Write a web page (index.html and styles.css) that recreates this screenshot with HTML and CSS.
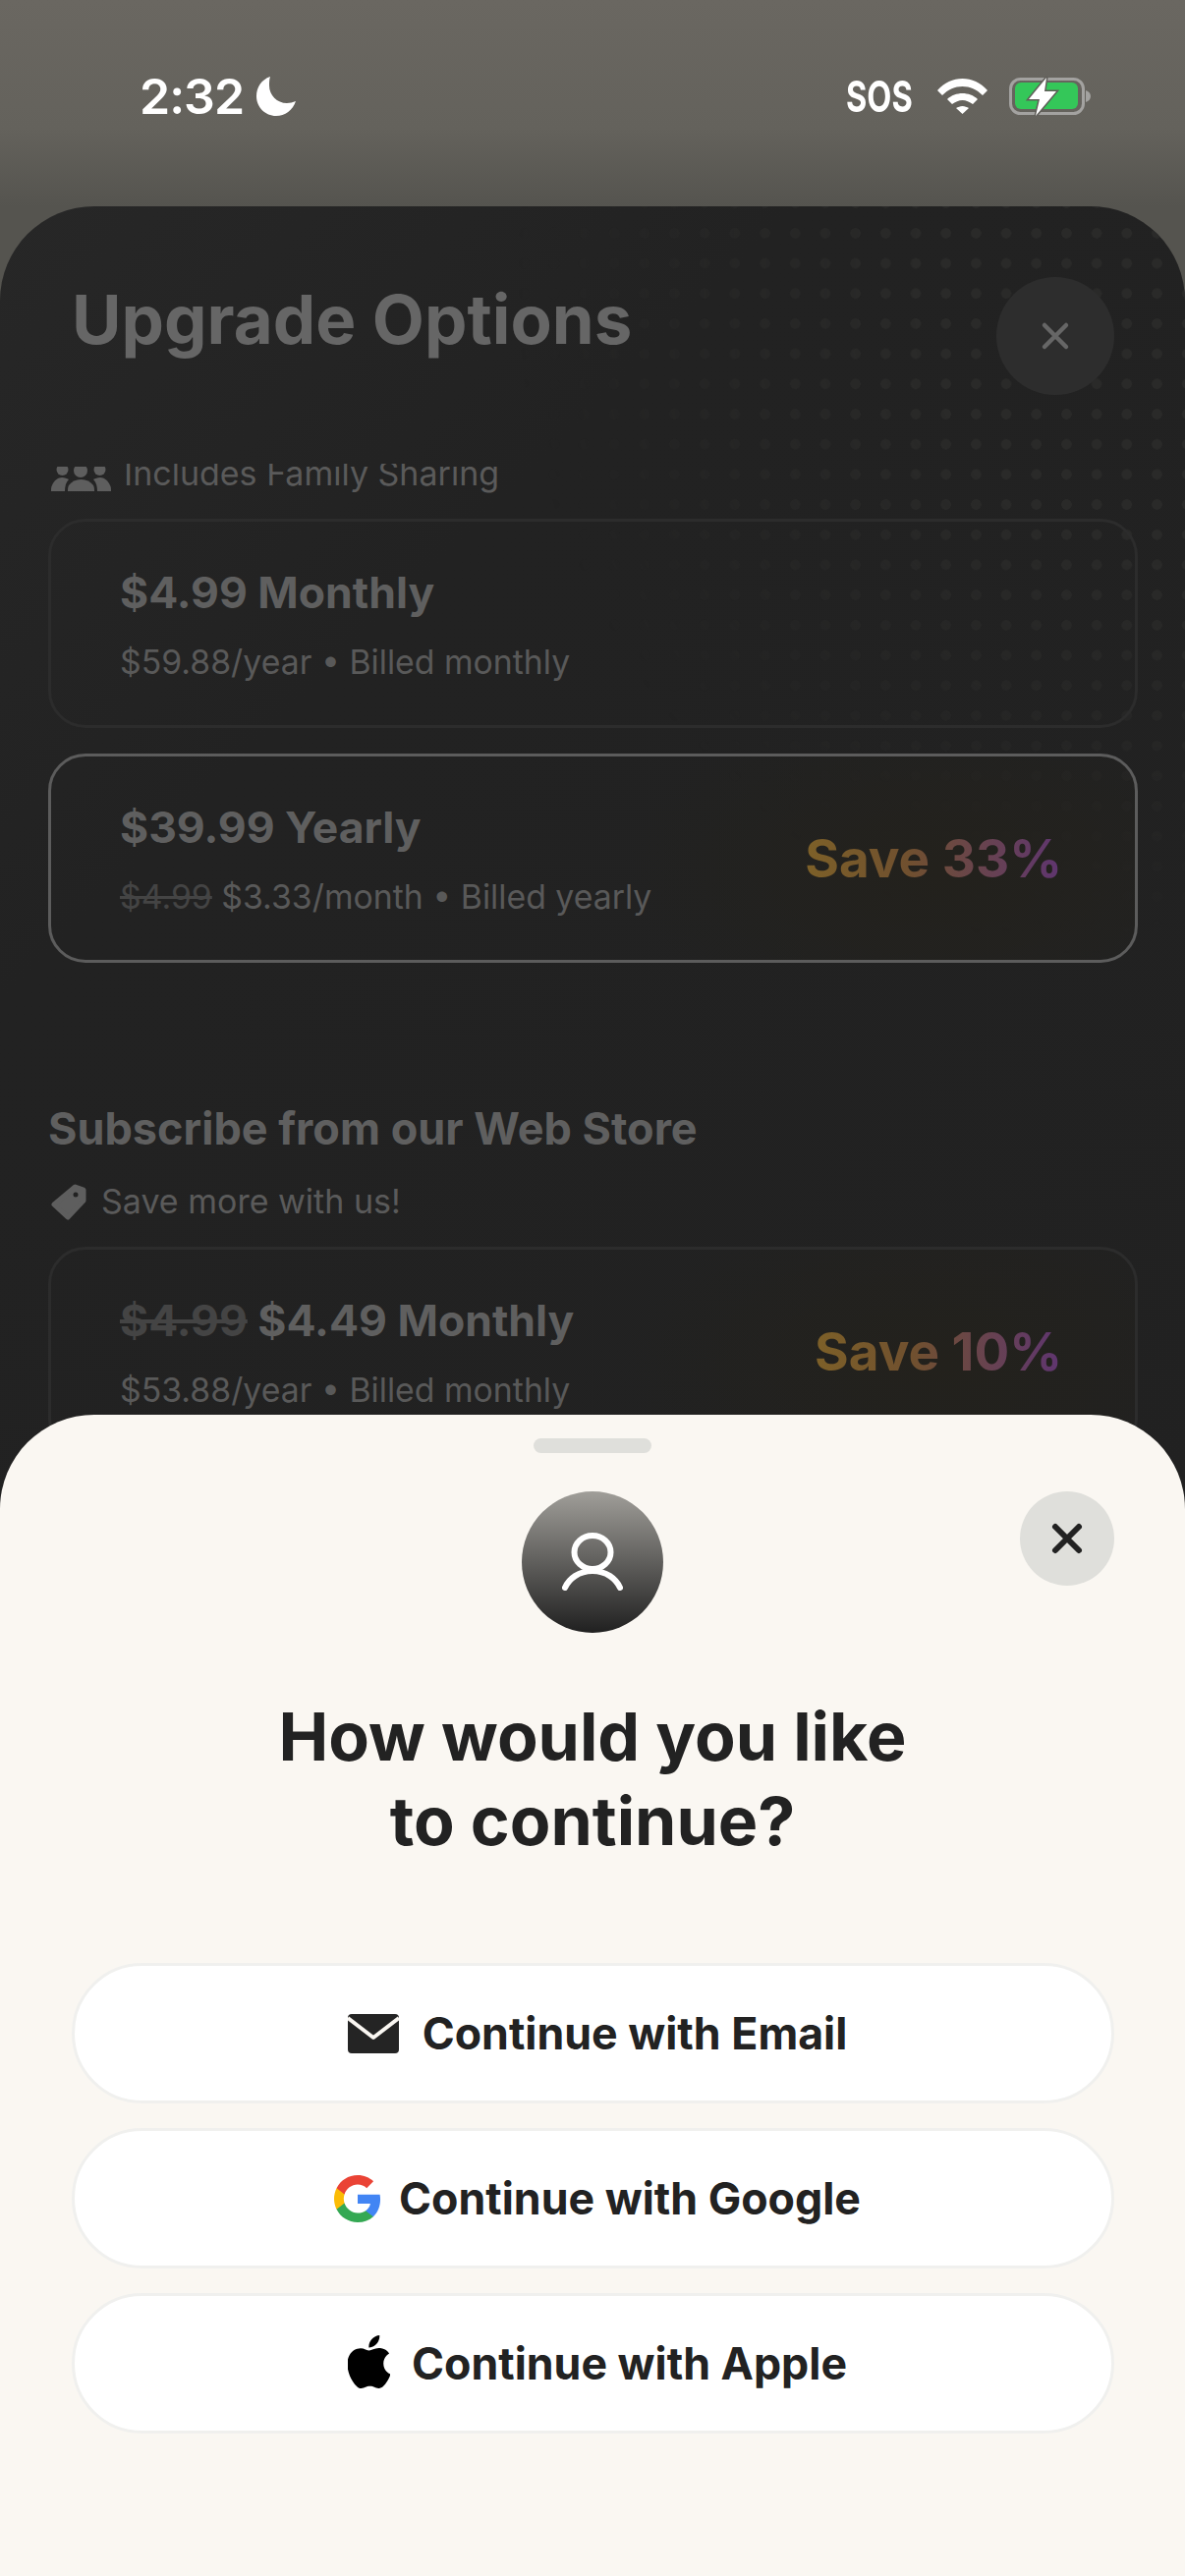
FILE: index.html
```html
<!DOCTYPE html>
<html lang="en">
<head>
    <meta charset="UTF-8">
    <meta name="viewport" content="width=device-width, initial-scale=1.0">
    <title>Upgrade Options</title>
    <link rel="stylesheet" href="styles.css">
</head>
<body>
    <div class="screen">
        <div class="status-bar">
            <div class="status-left">
                <span class="clock">2:32</span>
                <svg class="moon" viewBox="0 0 40 40"><path d="M14 0C5 3 0 11 0 20c0 11 9 20 20 20 9 0 17-6 20-15-3 1-6 2-9 2-10 0-18-8-18-18 0-3 0-6 1-9z" fill="#fff"/></svg>
            </div>
            <div class="status-right">
                <span class="sos">SOS</span>
                <svg class="wifi" viewBox="0 0 51 37"><path d="M0 13C7 5 16 1 25.500 1S44 5 51 13l-5 5C40 12 33 9 25.500 9S11 12 5 18z" fill="#fff"/><path d="M10 22c4-4 10-6 15.500-6S37 18 41 22l-5 5c-3-2-7-4-10.500-4S18 25 15 27z" fill="#fff"/><path d="M19 31c2-1 4-2 6.500-2s4.500 1 6.500 2l-6.500 6z" fill="#fff"/></svg>
                <svg class="battery" viewBox="0 0 83 40">
                    <rect x="1.500" y="2.500" width="74" height="35" rx="10" fill="none" stroke="#a3a2a0" stroke-width="3"/>
                    <path d="M78 14c3 1 5 3 5 6s-2 5-5 6z" fill="#a3a2a0"/>
                    <rect x="6" y="6" width="64" height="27" rx="6" fill="#34c759"/>
                    <path d="M38 1 20 23h11l-4 17 21-25H36z" fill="#fff" stroke="#5f5d58" stroke-width="3" paint-order="stroke"/>
                </svg>
            </div>
        </div>

        <div class="upgrade-sheet">
            <div class="dots"></div>
            <div class="upgrade-header">
                <h1 class="upgrade-title">Upgrade Options</h1>
                <div class="upgrade-close">
                    <svg viewBox="0 0 30 30"><path d="M4 4 26 26M26 4 4 26" stroke="#666" stroke-width="4.500" stroke-linecap="round"/></svg>
                </div>
            </div>

            <div class="section-note section-note-clipped">
                <svg class="family-icon" viewBox="0 0 61 25"><g fill="#5e5e5e"><circle cx="11.500" cy="3" r="6"/><circle cx="30" cy="4" r="7"/><circle cx="49.500" cy="3" r="6"/><path d="M0 25c0-3 0-4 1-6 2-5 6-8 10-8 3 0 5 1 7 2-3 3-4 7-4 12z"/><path d="M61 25c0-3 0-4-1-6-2-5-6-8-10-8-3 0-5 1-7 2 3 3 4 7 4 12z"/><path d="M17 25c0-2 0-4 1-6 3-4 7-6 12.500-6S40 15 43 19c1 2 1 4 1 6z"/></g></svg>
                <span>Includes Family Sharing</span>
            </div>

            <div class="plan-list">
                <div class="plan-card">
                    <div class="plan-info">
                        <div class="plan-name">$4.99 Monthly</div>
                        <div class="plan-detail">$59.88/year • Billed monthly</div>
                    </div>
                </div>
                <div class="plan-card plan-card-selected">
                    <div class="plan-info">
                        <div class="plan-name">$39.99 Yearly</div>
                        <div class="plan-detail"><s class="old-price">$4.99</s> $3.33/month • Billed yearly</div>
                    </div>
                    <div class="plan-save">Save 33%</div>
                </div>
            </div>

            <h2 class="section-title">Subscribe from our Web Store</h2>
            <div class="section-note">
                <svg class="tag-icon" viewBox="0 0 36 37"><path d="M24.500 3 33 6 33 17 17 34 3 21z" fill="#5e5e5e" stroke="#5e5e5e" stroke-width="5" stroke-linejoin="round"/><circle cx="25" cy="11" r="2.500" fill="#222"/></svg>
                <span>Save more with us!</span>
            </div>

            <div class="plan-list">
                <div class="plan-card plan-card-deal">
                    <div class="plan-info">
                        <div class="plan-name"><s class="old-price">$4.99</s> $4.49 Monthly</div>
                        <div class="plan-detail">$53.88/year • Billed monthly</div>
                    </div>
                    <div class="plan-save">Save 10%</div>
                </div>
            </div>
        </div>

        <div class="auth-sheet">
            <div class="handle"></div>
            <div class="auth-close">
                <svg viewBox="0 0 30 30"><path d="M3 3 27 27M27 3 3 27" stroke="#222" stroke-width="6" stroke-linecap="round"/></svg>
            </div>
            <div class="avatar">
                <svg viewBox="0 0 62 60"><ellipse cx="31" cy="20" rx="18.500" ry="17" fill="none" stroke="#fff" stroke-width="6"/><path d="M3 56c4-9 14-17 28-17s24 8 28 17" fill="none" stroke="#fff" stroke-width="6" stroke-linecap="round"/></svg>
            </div>
            <h2 class="auth-title">How would you like<br>to continue?</h2>
            <div class="auth-buttons">
                <button class="auth-btn auth-btn-email">
                    <svg class="mail-icon" viewBox="0 0 52 40"><rect width="52" height="40" rx="4" fill="#242424"/><path d="M0 4 26 24 52 4" fill="none" stroke="#faf7f2" stroke-width="4" stroke-linejoin="round"/></svg>
                    Continue with Email
                </button>
                <button class="auth-btn auth-btn-google">
                    <svg class="google-icon" viewBox="2 2 44 44">
                        <path fill="#4285F4" d="M45.120 24.500c0-1.560-.14-3.060-.4-4.500H24v8.510h11.840c-.51 2.750-2.060 5.080-4.390 6.640v5.520h7.110c4.160-3.830 6.560-9.470 6.560-16.170z"/>
                        <path fill="#34A853" d="M24 46c5.940 0 10.920-1.970 14.560-5.330l-7.110-5.520c-1.970 1.320-4.490 2.100-7.450 2.100-5.730 0-10.580-3.870-12.310-9.070H4.340v5.700C7.960 41.070 15.400 46 24 46z"/>
                        <path fill="#FBBC05" d="M11.690 28.180C11.250 26.860 11 25.450 11 24s.25-2.860.69-4.180v-5.700H4.340C2.850 17.090 2 20.450 2 24c0 3.550.85 6.910 2.340 9.880l7.350-5.700z"/>
                        <path fill="#EA4335" d="M24 10.750c3.230 0 6.130 1.110 8.410 3.290l6.310-6.310C34.910 4.180 29.930 2 24 2 15.400 2 7.960 6.930 4.340 14.120l7.350 5.700c1.730-5.200 6.580-9.070 12.310-9.070z"/>
                    </svg>
                    Continue with Google
                </button>
                <button class="auth-btn auth-btn-apple">
                    <svg class="apple-icon" viewBox="2.500 0 19 24"><path fill="#000" d="M12.152 6.896c-.948 0-2.415-1.078-3.960-1.040-2.040.027-3.910 1.183-4.961 3.014-2.117 3.675-.546 9.103 1.519 12.090 1.013 1.454 2.208 3.090 3.792 3.039 1.520-.065 2.090-.987 3.935-.987 1.831 0 2.350.987 3.960.948 1.637-.026 2.676-1.480 3.676-2.948 1.156-1.688 1.636-3.325 1.662-3.415-.039-.013-3.182-1.221-3.220-4.857-.026-3.040 2.480-4.494 2.597-4.559-1.429-2.090-3.623-2.324-4.390-2.376-2-.156-3.675 1.090-4.610 1.090zM15.530 3.830c.843-1.012 1.400-2.427 1.245-3.830-1.207.052-2.662.805-3.532 1.818-.78.896-1.454 2.338-1.273 3.714 1.338.104 2.715-.688 3.559-1.701"/></svg>
                    Continue with Apple
                </button>
            </div>
        </div>
    </div>
</body>
</html>
```

FILE: styles.css
```css
* {
    box-sizing: border-box;
}
body {
    margin: 0;
    font-family: Inter, "Noto Sans", sans-serif;
    background-color: #222;
}
.screen {
    position: relative;
    width: 1206px;
    height: 2622px;
    overflow: hidden;
    background: linear-gradient(180deg, #6a6761 0, #64625c 130px, #55544f 210px);
}
.status-bar {
    display: flex;
    justify-content: space-between;
    height: 210px;
    padding: 78px 96px 0 142px;
}
.status-left,
.status-right {
    display: flex;
    align-items: flex-start;
    height: 40px;
}
.clock {
    font-size: 50px;
    font-weight: 600;
    line-height: 40px;
    letter-spacing: -1px;
    color: #fff;
}
.moon {
    width: 40px;
    height: 40px;
    margin-left: 13px;
}
.sos {
    width: 66px;
    font-size: 44px;
    font-weight: 700;
    line-height: 40px;
    color: #fff;
    transform: scaleX(0.74);
    transform-origin: left center;
    margin-right: 27px;
    white-space: nowrap;
}
.wifi {
    width: 51px;
    height: 37px;
    margin-top: 1px;
    margin-right: 22px;
}
.battery {
    width: 83px;
    height: 40px;
}
.upgrade-sheet {
    position: relative;
    height: 1500px;
    padding: 72px 48px 0 49px;
    background: linear-gradient(135deg, #272727 0, #222 30%, #212121 100%);
    border-radius: 96px 96px 0 0;
}
.dots {
    position: absolute;
    top: 0;
    right: 0;
    width: 720px;
    height: 760px;
    border-top-right-radius: 96px;
    background-image: radial-gradient(circle, #2a2a29 5px, transparent 5.500px);
    background-size: 30.700px 30.700px;
    background-position: 1px 12px;
    -webkit-mask-image: radial-gradient(ellipse 680px 700px at 100% 10%, #000 40%, transparent 100%);
    mask-image: radial-gradient(ellipse 680px 700px at 100% 10%, #000 40%, transparent 100%);
}
.upgrade-header {
    position: relative;
    display: flex;
    justify-content: space-between;
    align-items: flex-start;
    height: 120px;
    padding-left: 25px;
    padding-right: 24px;
}
.upgrade-title {
    margin: 1px 0 0 -1px;
    font-size: 69px;
    font-weight: 700;
    line-height: 84px;
    color: #666;
}
.upgrade-close {
    display: flex;
    align-items: center;
    justify-content: center;
    width: 120px;
    height: 120px;
    border-radius: 50%;
    background-color: #2d2d2d;
}
.upgrade-close svg {
    width: 30px;
    height: 30px;
}
.section-note {
    position: relative;
    display: flex;
    align-items: center;
    gap: 15px;
    height: 40px;
    font-size: 34px;
    line-height: 40px;
    color: #5a5a5a;
}
.section-note-clipped {
    height: 30px;
    margin-top: 70px;
    margin-bottom: 26px;
    padding-left: 3px;
    gap: 13px;
    align-items: flex-end;
    overflow: hidden;
}
.family-icon {
    width: 61px;
    height: 25px;
    flex-shrink: 0;
    margin-bottom: 2px;
}
.tag-icon {
    width: 36px;
    height: 37px;
    margin-left: 3px;
}
.plan-list {
    position: relative;
    display: flex;
    flex-direction: column;
    gap: 26px;
}
.plan-card {
    display: flex;
    align-items: center;
    justify-content: space-between;
    width: 1109px;
    height: 213px;
    padding: 0 74px 0 70px;
    border: 3px solid #2c2c2c;
    border-radius: 38px;
}
.plan-card-selected {
    border-color: #5c5c5c;
    background: radial-gradient(ellipse 320px 170px at 82% 55%, #23211c 0, transparent 100%);
}
.plan-card-deal {
    background: radial-gradient(ellipse 320px 170px at 82% 55%, #23211c 0, transparent 100%);
}
.plan-name {
    font-size: 44.500px;
    font-weight: 700;
    line-height: 54px;
    color: #5f5f5f;
}
.plan-detail {
    margin-top: 24px;
    font-size: 33.800px;
    line-height: 40px;
    color: #595959;
}
.old-price {
    color: #444;
}
.plan-save {
    font-size: 53px;
    font-weight: 700;
    line-height: 60px;
    background: linear-gradient(90deg, #7d6028 0, #70502f 40%, #5f3570 100%);
    -webkit-background-clip: text;
    background-clip: text;
    color: transparent;
}
.section-title {
    position: relative;
    margin: 139px 0 0;
    font-size: 45px;
    font-weight: 700;
    line-height: 60px;
    color: #5f5f5f;
}
.section-title + .section-note {
    margin-top: 24px;
    margin-bottom: 26px;
}
.auth-sheet {
    position: absolute;
    top: 1440px;
    left: 0;
    width: 1206px;
    height: 1182px;
    padding-top: 24px;
    background-color: #faf7f2;
    border-radius: 96px 96px 0 0;
}
.handle {
    width: 120px;
    height: 15px;
    margin: 0 auto;
    border-radius: 8px;
    background-color: #dfdfdb;
}
.auth-close {
    position: absolute;
    top: 78px;
    right: 72px;
    display: flex;
    align-items: center;
    justify-content: center;
    width: 96px;
    height: 96px;
    border-radius: 50%;
    background-color: #dfdfdb;
}
.auth-close svg {
    width: 30px;
    height: 30px;
    overflow: visible;
}
.avatar {
    display: flex;
    align-items: center;
    justify-content: center;
    width: 144px;
    height: 144px;
    margin: 39px auto 0;
    border-radius: 50%;
    background: linear-gradient(180deg, #a09e99 0, #202020 100%);
}
.avatar svg {
    width: 62px;
    height: 60px;
}
.auth-title {
    margin: 62px 0 0;
    font-size: 68px;
    font-weight: 700;
    line-height: 86px;
    text-align: center;
    color: #222;
}
.auth-buttons {
    display: flex;
    flex-direction: column;
    gap: 25px;
    margin: 102px 72px 0 73px;
}
.auth-btn {
    display: flex;
    align-items: center;
    justify-content: center;
    width: 100%;
    height: 143px;
    padding: 0 0 0 9px;
    border: 3px solid #f0f0ee;
    border-radius: 72px;
    background-color: #fff;
    font-family: inherit;
    font-size: 44.700px;
    font-weight: 700;
    color: #222;
}
.auth-btn-email {
    gap: 24px;
}
.auth-btn-google {
    gap: 18px;
}
.auth-btn-apple {
    gap: 22px;
}
.mail-icon {
    width: 52px;
    height: 40px;
}
.google-icon {
    width: 48px;
    height: 48px;
}
.apple-icon {
    width: 43px;
    height: 54px;
    margin-bottom: 4px;
}
```
